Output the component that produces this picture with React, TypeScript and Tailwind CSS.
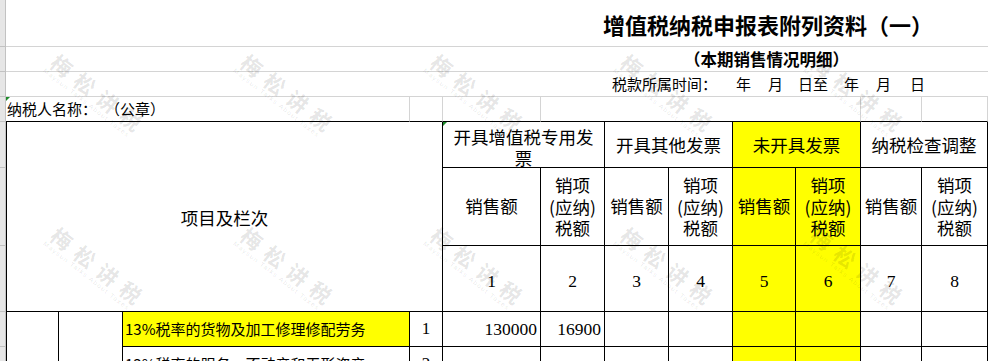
import type { ReactNode } from "react"
import clsx from "clsx"

// excel-like sheet: 增值税纳税申报表附列资料（一）

function Cell({ className, children }: { className?: string; children?: ReactNode }) {
  return (
    <div className={clsx("flex items-center justify-center border-r border-b border-black text-center", className)}>
      {children}
    </div>
  )
}

// full-width punctuation kept at 1em, as the sheet font draws it
function Open() {
  return <span className="inline-block w-[1em] text-right">（</span>
}
function Close() {
  return <span className="inline-block w-[1em] text-left">）</span>
}
function Colon() {
  return <span className="inline-block w-[1em] text-left">：</span>
}

function Corner() {
  return <span className="absolute left-0 top-0 h-0 w-0 border-t-[4px] border-r-[4px] border-t-[#1d8a2a] border-r-transparent" />
}

function Watermark({ x, y }: { x: number; y: number }) {
  return (
    <div
      className="absolute origin-[10px_10px] rotate-[38deg] whitespace-nowrap text-black/[0.11]"
      style={{ left: x - 10, top: y - 10 }}
    >
      <div className="text-[21px] font-bold leading-[20px] tracking-[8px]">梅松讲税</div>
      <div className="-ml-[1px] font-['Liberation_Sans',sans-serif] text-[6.5px] leading-[9px] tracking-[1.3px]">
        Maysun Talks About Taxes
      </div>
    </div>
  )
}

const numbers = ["1", "2", "3", "4", "5", "6", "7", "8"]

export default function App() {
  return (
    <div className="relative h-[361px] w-[988px] overflow-hidden bg-white font-['Noto_Sans_CJK_SC',sans-serif] text-black [text-spacing-trim:space-all]">
      <div className="grid grid-cols-[6px_53px_64px_287px_33px_98px_64px_64px_64px_63px_65px_61px_66px] grid-rows-[47px_25px_25px_25px_46px_78px_66px_35px_35px]">
        {/* row header strip */}
        <div className="col-start-1 row-start-1 border-r border-b border-[#c2c2c2] bg-[#e6e6e6]" />
        <div className="col-start-1 row-start-2 border-r border-b border-[#c2c2c2] bg-[#e6e6e6]" />
        <div className="col-start-1 row-start-3 border-r border-b border-[#c2c2c2] bg-[#e6e6e6]" />
        <div className="col-start-1 row-start-4 border-r border-b border-[#c2c2c2] bg-[#e6e6e6]" />
        <div className="col-start-1 row-start-5 border-r border-b border-[#c2c2c2] bg-[#e6e6e6]" />
        <div className="col-start-1 row-start-6 border-r border-b border-[#c2c2c2] bg-[#e6e6e6]" />
        <div className="col-start-1 row-start-7 border-r border-b border-[#c2c2c2] bg-[#e6e6e6]" />
        <div className="col-start-1 row-start-8 border-r border-b border-[#c2c2c2] bg-[#e6e6e6]" />
        <div className="col-start-1 row-start-9 border-r border-b border-[#c2c2c2] bg-[#e6e6e6]" />

        {/* title rows */}
        <div className="col-span-12 col-start-2 row-start-1 flex items-center border-b border-[#d4d4d4] pl-[597px] pt-[3px] text-[22px] font-bold">
          <span>
            增值税纳税申报表附列资料
            <Open />一<Close />
          </span>
        </div>
        <div className="col-span-12 col-start-2 row-start-2 flex items-center border-b border-[#d4d4d4] pl-[678px] text-[16.5px] font-bold">
          <span>
            <Open />
            本期销售情况明细
            <Close />
          </span>
        </div>
        <div className="col-span-12 col-start-2 row-start-3 flex items-center border-b border-[#d4d4d4] pl-[606px] text-[15px]">
          <span>
            税款所属时间
            <Colon />
          </span>
          <span className="ml-[19px]">年</span>
          <span className="ml-[17px]">月</span>
          <span className="ml-[15px]">日至</span>
          <span className="ml-[16px]">年</span>
          <span className="ml-[17px]">月</span>
          <span className="ml-[19px]">日</span>
        </div>

        {/* taxpayer row */}
        <div className="relative col-span-3 col-start-2 row-start-4 flex items-center border-r border-b border-r-[#d4d4d4] border-b-black pl-[1px] text-[15px]">
          <Corner />
          <span>
            纳税人名称
            <Colon />
          </span>
          <span className="ml-[8px]">
            <Open />
            公章
            <Close />
          </span>
        </div>
        <div className="col-start-5 row-start-4 border-r border-b border-r-[#d4d4d4] border-b-black" />
        <div className="col-start-6 row-start-4 border-r border-b border-r-[#d4d4d4] border-b-black" />
        <div className="col-span-5 col-start-7 row-start-4 border-r border-b border-r-[#d4d4d4] border-b-black" />
        <div className="col-start-12 row-start-4 border-r border-b border-r-[#d4d4d4] border-b-black" />
        <div className="col-start-13 row-start-4 border-r border-b border-r-[#d4d4d4] border-b-black" />

        {/* header */}
        <Cell className="col-span-4 col-start-2 row-span-3 row-start-5 border-l pt-[3px] text-[17.5px]">项目及栏次</Cell>
        <Cell className="relative col-span-2 col-start-6 row-start-5 pt-[4px] text-[17.5px] leading-[21px]">
          <Corner />
          <span>
            开具增值税专用发
            <br />票
          </span>
        </Cell>
        <Cell className="col-span-2 col-start-8 row-start-5 pt-[2px] text-[17.5px]">开具其他发票</Cell>
        <Cell className="col-span-2 col-start-10 row-start-5 bg-[#ffff00] pt-[2px] text-[17.5px]">未开具发票</Cell>
        <Cell className="col-span-2 col-start-12 row-start-5 pt-[2px] text-[17.5px]">纳税检查调整</Cell>

        <Cell className="col-start-6 row-start-6 text-[17.5px]">销售额</Cell>
        <Cell className="col-start-7 row-start-6 text-[17.5px] leading-[21.5px]">
          <span>
            销项
            <br />
            (应纳)
            <br />
            税额
          </span>
        </Cell>
        <Cell className="col-start-8 row-start-6 text-[17.5px]">销售额</Cell>
        <Cell className="col-start-9 row-start-6 text-[17.5px] leading-[21.5px]">
          <span>
            销项
            <br />
            (应纳)
            <br />
            税额
          </span>
        </Cell>
        <Cell className="col-start-10 row-start-6 bg-[#ffff00] text-[17.5px]">销售额</Cell>
        <Cell className="col-start-11 row-start-6 bg-[#ffff00] text-[17.5px] leading-[21.5px]">
          <span>
            销项
            <br />
            (应纳)
            <br />
            税额
          </span>
        </Cell>
        <Cell className="col-start-12 row-start-6 text-[17.5px]">销售额</Cell>
        <Cell className="col-start-13 row-start-6 text-[17.5px] leading-[21.5px]">
          <span>
            销项
            <br />
            (应纳)
            <br />
            税额
          </span>
        </Cell>

        {numbers.map((n, i) => (
          <Cell
            key={n}
            className={clsx(
              "row-start-7 pt-[5px] font-['Liberation_Serif',serif] text-[17.5px]",
              i === 4 || i === 5 ? "bg-[#ffff00]" : "",
            )}
          >
            {n}
          </Cell>
        ))}

        {/* data rows */}
        <div className="col-start-2 row-span-2 row-start-8 border-r border-l border-black" />
        <div className="col-start-3 row-span-2 row-start-8 border-r border-black" />
        <Cell className="col-start-4 row-start-8 justify-start bg-[#ffff00] pl-[2px] text-[15px]">13%税率的货物及加工修理修配劳务</Cell>
        <Cell className="col-start-5 row-start-8 font-['Liberation_Serif',serif] text-[17px]">1</Cell>
        <Cell className="col-start-6 row-start-8 justify-end pr-[3px] font-['Liberation_Serif',serif] text-[17.5px]">130000</Cell>
        <Cell className="col-start-7 row-start-8 justify-end pr-[3px] font-['Liberation_Serif',serif] text-[17.5px]">16900</Cell>
        <Cell className="col-start-8 row-start-8" />
        <Cell className="col-start-9 row-start-8" />
        <Cell className="col-start-10 row-start-8 bg-[#ffff00]" />
        <Cell className="col-start-11 row-start-8 bg-[#ffff00]" />
        <Cell className="col-start-12 row-start-8" />
        <Cell className="col-start-13 row-start-8" />

        <Cell className="col-start-4 row-start-9 justify-start pl-[2px] text-[15px]">13%税率的服务、不动产和无形资产</Cell>
        <Cell className="col-start-5 row-start-9 font-['Liberation_Serif',serif] text-[17px]">2</Cell>
        <Cell className="col-start-6 row-start-9" />
        <Cell className="col-start-7 row-start-9" />
        <Cell className="col-start-8 row-start-9" />
        <Cell className="col-start-9 row-start-9" />
        <Cell className="col-start-10 row-start-9 bg-[#ffff00]" />
        <Cell className="col-start-11 row-start-9 bg-[#ffff00]" />
        <Cell className="col-start-12 row-start-9" />
        <Cell className="col-start-13 row-start-9" />
      </div>

      {/* watermark overlay */}
      <div className="pointer-events-none absolute inset-0">
        {[0, 1].map((j) =>
          [0, 1, 2, 3, 4].map((i) => <Watermark key={`${i}-${j}`} x={62 + i * 190} y={65 + j * 173} />),
        )}
      </div>
    </div>
  )
}
